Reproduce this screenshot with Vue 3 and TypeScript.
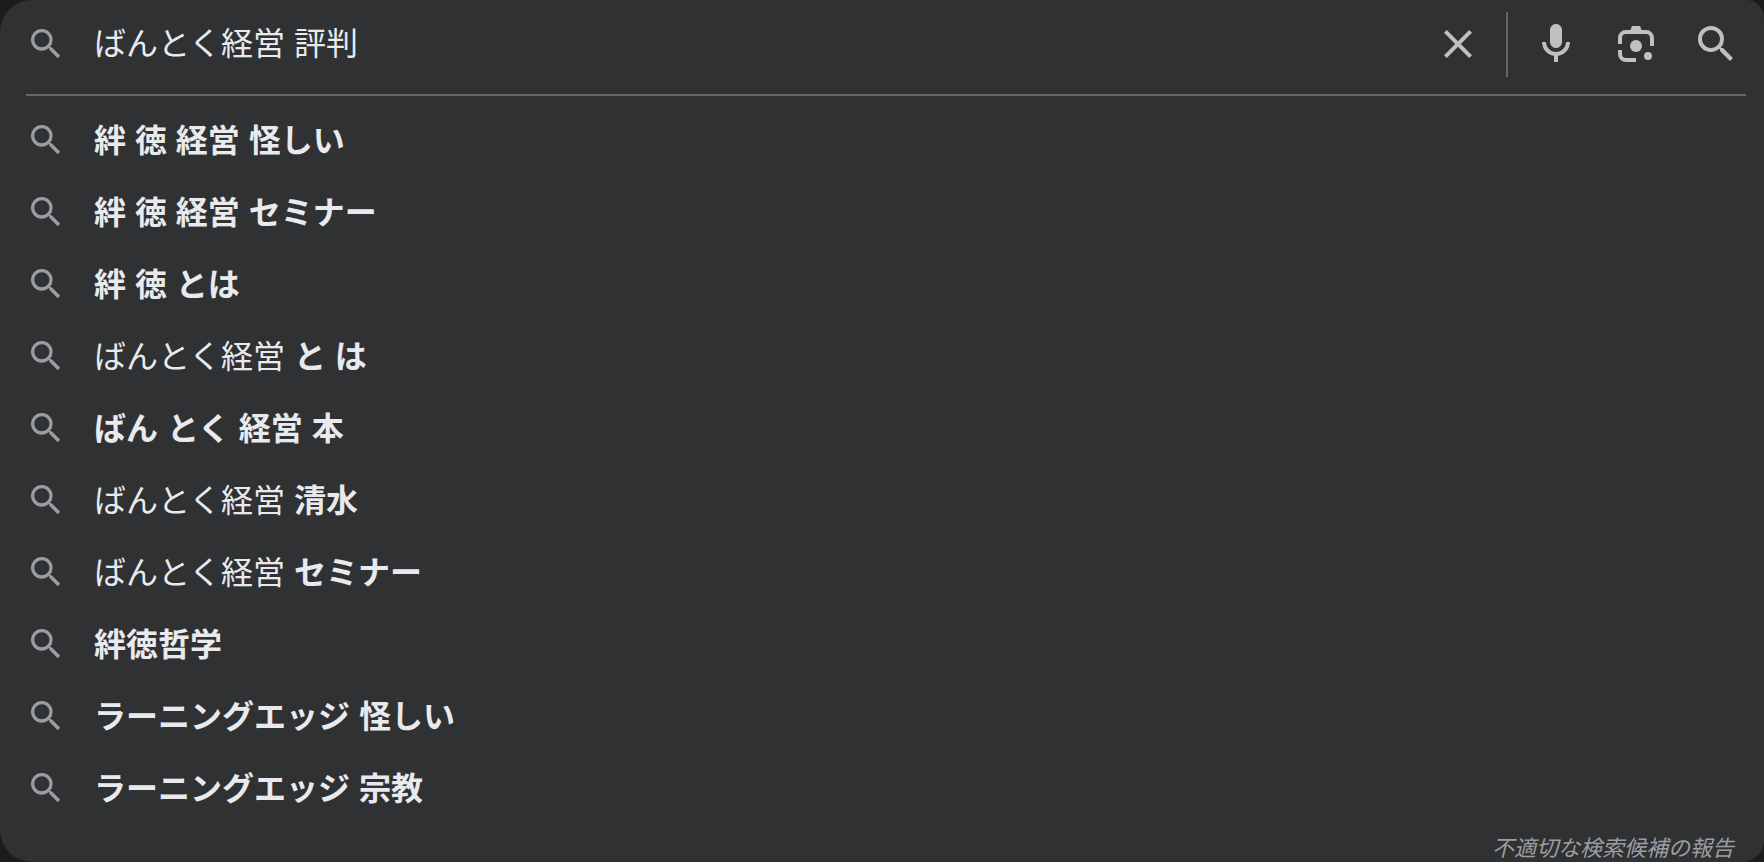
<script setup lang="ts">
import { ref } from 'vue'

interface Part {
  text: string
  bold: boolean
}

const query = ref('ばんとく経営 評判')

const b = (text: string): Part => ({ text, bold: true })
const n = (text: string): Part => ({ text, bold: false })

const suggestions: Part[][] = [
  [b('絆 徳 経営 怪しい')],
  [b('絆 徳 経営 セミナー')],
  [b('絆 徳 とは')],
  [n('ばんとく経営 '), b('と は')],
  [b('ばん とく 経営 本')],
  [n('ばんとく経営 '), b('清水')],
  [n('ばんとく経営 '), b('セミナー')],
  [b('絆徳哲学')],
  [b('ラーニングエッジ 怪しい')],
  [b('ラーニングエッジ 宗教')],
]

const pick = (parts: Part[]) => {
  query.value = parts.map((p) => p.text).join('')
}

const searchPath =
  'M15.5 14h-.79l-.28-.27A6.471 6.471 0 0 0 16 9.5 6.5 6.5 0 1 0 9.5 16c1.61 0 3.09-.59 4.23-1.57l.27.28v.79l5 4.99L20.49 19l-4.99-5zm-6 0C7.01 14 5 11.99 5 9.5S7.01 5 9.5 5 14 7.01 14 9.5 11.99 14 9.5 14z'
</script>

<template>
  <main class="panel">
    <form class="bar" role="search" @submit.prevent>
      <svg class="lead" viewBox="0 0 24 24" aria-hidden="true"><path :d="searchPath" /></svg>
      <input v-model="query" class="field" type="text" aria-label="検索" autocomplete="off" />
      <button class="tool" type="button" aria-label="クリア" @click="query = ''">
        <svg viewBox="0 0 24 24" aria-hidden="true">
          <path d="M19 6.41L17.59 5 12 10.59 6.41 5 5 6.41 10.59 12 5 17.59 6.41 19 12 13.41 17.59 19 19 17.59 13.41 12z" />
        </svg>
      </button>
      <span class="separator"></span>
      <div class="tools">
        <button class="tool" type="button" aria-label="音声で検索">
          <svg viewBox="0 0 24 24" aria-hidden="true">
            <path d="M12 14c1.66 0 3-1.34 3-3V5c0-1.66-1.34-3-3-3S9 3.34 9 5v6c0 1.66 1.34 3 3 3z" />
            <path d="M17 11c0 2.76-2.24 5-5 5s-5-2.24-5-5H5c0 3.53 2.61 6.43 6 6.92V21h2v-3.08c3.39-.49 6-3.39 6-6.92z" />
          </svg>
        </button>
        <button class="tool" type="button" aria-label="画像で検索">
          <svg viewBox="0 0 24 24" aria-hidden="true">
            <path
              class="stroke"
              d="M4 12V9a3 3 0 0 1 3-3h10a3 3 0 0 1 3 3v4M4 15v2a3 3 0 0 0 3 3h5"
            />
            <path d="M9 5.5L10 3h4l1 2.5z" />
            <circle cx="12" cy="13" r="3" />
            <circle cx="18" cy="18" r="2" />
          </svg>
        </button>
        <button class="tool" type="submit" aria-label="検索を実行">
          <svg viewBox="0 0 24 24" aria-hidden="true"><path :d="searchPath" /></svg>
        </button>
      </div>
    </form>

    <ul class="list">
      <li v-for="(parts, i) in suggestions" :key="i">
        <button class="row" type="button" @click="pick(parts)">
          <svg class="lead" viewBox="0 0 24 24" aria-hidden="true"><path :d="searchPath" /></svg>
          <span class="label"><template v-for="(p, j) in parts" :key="j"><b v-if="p.bold">{{ p.text }}</b><template v-else>{{ p.text }}</template></template></span>
        </button>
      </li>
    </ul>

    <footer class="foot">
      <button class="report" type="button">不適切な検索候補の報告</button>
    </footer>
  </main>
</template>

<style>
body {
  margin: 0;
  background: #1c1c1d;
}
</style>

<style scoped>
.panel {
  box-sizing: border-box;
  min-height: 100vh;
  background: #303133;
  border-radius: 32px 18px 22px 32px;
  color: #e8eaed;
  font-family: 'Liberation Sans', 'Noto Sans CJK JP', sans-serif;
  font-size: 32px;
}
button,
input {
  margin: 0;
  padding: 0;
  border: 0;
  background: none;
  color: inherit;
  font: inherit;
}
button {
  cursor: pointer;
}
svg {
  display: block;
  fill: currentColor;
}
.bar {
  display: flex;
  align-items: center;
  height: 88px;
  margin: 0 18px 0 26px;
  padding: 0 6px 6px 0;
  border-bottom: 2px solid #656668;
}
.lead {
  flex: none;
  width: 40px;
  height: 40px;
  margin-right: 28px;
  color: #9b9ea1;
}
.field {
  flex: 1;
  min-width: 0;
  height: 48px;
  line-height: 48px;
  outline: 0;
}
.tool {
  flex: none;
  width: 48px;
  height: 48px;
  color: #bfc0c2;
}
.separator {
  flex: none;
  width: 2px;
  height: 65px;
  margin: 0 24px;
  background: #656668;
}
.tools {
  display: flex;
  gap: 32px;
}
.stroke {
  fill: none;
  stroke: currentColor;
  stroke-width: 2;
}
.list {
  margin: 0;
  padding: 8px 0 0;
  list-style: none;
}
.row {
  display: flex;
  align-items: center;
  width: 100%;
  height: 72px;
  padding: 0 26px;
  text-align: left;
}
.label {
  padding-top: 2px;
  line-height: 48px;
  white-space: pre;
}
.foot {
  display: flex;
  justify-content: flex-end;
  padding: 12px 30px 0;
}
.report {
  color: #9b9ea1;
  font-size: 22px;
  font-style: italic;
  line-height: 26px;
}
</style>
